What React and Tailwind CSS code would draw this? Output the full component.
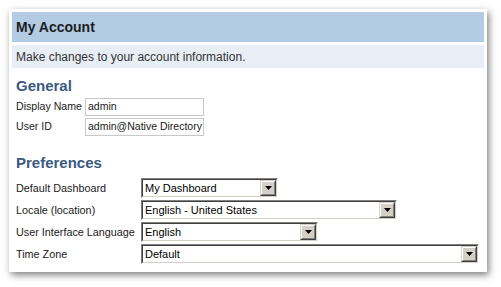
const prefs = [
  { label: "Default Dashboard", value: "My Dashboard", width: "w-[137px]" },
  { label: "Locale (location)", value: "English - United States", width: "w-[256px]" },
  { label: "User Interface Language", value: "English", width: "w-[177px]" },
  { label: "Time Zone", value: "Default", width: "w-[338px]" },
];

const general = [
  { label: "Display Name", value: "admin" },
  { label: "User ID", value: "admin@Native Directory" },
];

const DropButton = () => (
  <div className="w-[16px] h-[16px] border border-t-[#d4d0c8] border-l-[#d4d0c8] border-b-[#404040] border-r-[#404040] shrink-0">
    <div className="w-full h-full border border-t-white border-l-white border-b-[#808080] border-r-[#808080] bg-[#d4d0c8] flex items-center justify-center">
      <svg width="7" height="4" viewBox="0 0 7 4">
        <path d="M0 0h7L3.5 4z" fill="#000" />
      </svg>
    </div>
  </div>
);

const Select = ({ value, width }) => (
  <div className={`${width} h-[20px] border border-t-[#808080] border-l-[#808080] border-b-white border-r-white`}>
    <div className="w-full h-full border border-t-[#404040] border-l-[#404040] border-b-[#d4d0c8] border-r-[#d4d0c8] bg-white flex items-center">
      <span className="flex-1 pl-[2px] text-[11px] text-black whitespace-nowrap overflow-hidden">{value}</span>
      <DropButton />
    </div>
  </div>
);

export default function App() {
  return (
    <div
      className="w-[501px] h-[287px] bg-white pt-[9px] pl-[9px]"
      style={{ fontFamily: '"Liberation Sans", Arial, sans-serif' }}
    >
      <div className="w-[478px] h-[263px] bg-white p-[3px] shadow-[2px_3px_7px_rgba(0,0,0,0.5)]">
        <div className="h-[30px] bg-[#b3cbe3] flex items-center pl-1">
          <h1 className="text-[14px] font-bold text-[#1e1e1e]">My Account</h1>
        </div>
        <div className="mt-[3px] h-[23px] bg-[#e8eef6] flex items-center pl-1 text-[12px] text-[#333]">
          Make changes to your account information.
        </div>

        <div className="px-1">
          <h2 className="mt-[8px] h-[20px] leading-[20px] text-[15px] font-bold text-[#3a5a80]">
            General
          </h2>
          <div className="mt-[2px] flex flex-col gap-[2px]">
            {general.map((row) => (
              <div key={row.label} className="flex items-center h-[18px]">
                <span className="w-[69px] text-[10.6px] text-[#1a1a1a] whitespace-nowrap">{row.label}</span>
                <div className="w-[119px] h-[18px] border border-[#c8c8c8] flex items-center pl-[2px] text-[10.5px] text-[#1a1a1a] whitespace-nowrap overflow-hidden">
                  {row.value}
                </div>
              </div>
            ))}
          </div>

          <h2 className="mt-[17px] h-[20px] leading-[20px] text-[15px] font-bold text-[#3a5a80]">
            Preferences
          </h2>
          <div className="mt-[5px] flex flex-col gap-[2px]">
            {prefs.map((row) => (
              <div key={row.label} className="flex items-center h-[20px]">
                <span className="w-[125px] text-[10.8px] text-[#1a1a1a] whitespace-nowrap">{row.label}</span>
                <Select value={row.value} width={row.width} />
              </div>
            ))}
          </div>
        </div>
      </div>
    </div>
  );
}
